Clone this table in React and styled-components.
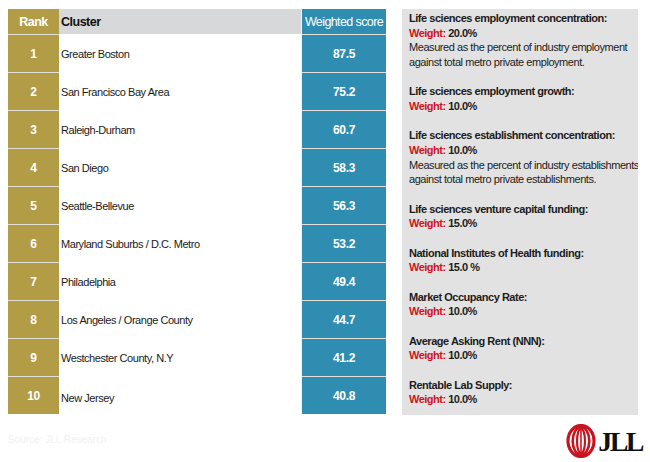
import React from 'react';
import styled, { createGlobalStyle } from 'styled-components';

const GlobalStyle = createGlobalStyle`
  body {
    margin: 0;
    background: #ffffff;
    font-family: 'Liberation Sans', Arial, sans-serif;
  }
`;

const Page = styled.div`
  width: 650px;
  height: 462px;
  padding: 9px 0 0 8px;
  box-sizing: border-box;
  display: flex;
  flex-direction: column;
`;

const Main = styled.div`
  display: flex;
  gap: 16px;
  align-items: flex-start;
`;

const Table = styled.div`
  width: 378px;
  display: grid;
  grid-template-columns: 51px 243px 84px;
`;

const HeadCell = styled.div`
  height: 25px;
  display: flex;
  align-items: center;
  justify-content: ${p => (p.$left ? 'flex-start' : 'center')};
  padding-left: ${p => (p.$left ? '2px' : '0')};
  background: ${p => p.$bg};
  color: ${p => p.$color};
  font-size: 12.5px;
  font-weight: ${p => (p.$regular ? 400 : 700)};
  letter-spacing: ${p => (p.$regular ? '-0.6px' : '-0.5px')};
  white-space: nowrap;
  border-right: ${p => (p.$divider ? '1px solid #eef2f4' : 'none')};
`;

const Cell = styled.div`
  height: 38px;
  box-sizing: border-box;
  border-top: 1px solid ${p => (p.$bg ? '#e2e0d6' : '#ffffff')};
  display: flex;
  align-items: center;
  justify-content: ${p => (p.$left ? 'flex-start' : 'center')};
  padding-left: ${p => (p.$left ? '2px' : '0')};
  padding-top: ${p => p.$shift || 0}px;
  background: ${p => p.$bg || '#ffffff'};
  color: ${p => (p.$bg ? '#ffffff' : '#1a1a1a')};
  font-size: ${p => (p.$bg ? '12px' : '11px')};
  font-weight: ${p => (p.$bg ? 700 : 400)};
  letter-spacing: ${p => (p.$bg ? '-0.3px' : '-0.45px')};
  white-space: nowrap;
  border-right: ${p => (p.$divider ? '1px solid #eef2f4' : 'none')};
`;

const Panel = styled.div`
  width: 236px;
  height: 406px;
  box-sizing: border-box;
  background: #e2e2e2;
  padding: 2px 0 0 7px;
  font-size: 11px;
  line-height: 14.67px;
  color: #1c1c1c;
  letter-spacing: -0.44px;
  overflow: hidden;
`;

const Factor = styled.div`
  margin-bottom: 14.67px;
`;

const Title = styled.div`
  font-weight: 700;
  letter-spacing: -0.47px;
  white-space: nowrap;
`;

const WeightLine = styled.div`
  font-weight: 700;
  letter-spacing: -0.5px;
`;

const WeightLabel = styled.span`
  color: #d0141c;
`;

const NoteLine = styled.div`
  font-weight: 400;
  white-space: nowrap;
`;

const Footer = styled.div`
  display: flex;
  justify-content: space-between;
  align-items: flex-start;
  padding-right: 8px;
  margin-top: 9px;
`;

const Source = styled.div`
  font-size: 10px;
  color: #f1f1f1;
  padding-top: 10px;
`;

const Logo = styled.div`
  display: flex;
  align-items: center;
  gap: 2px;
`;

const LogoText = styled.span`
  font-family: 'Liberation Serif', 'Times New Roman', serif;
  font-weight: 700;
  font-size: 28px;
  letter-spacing: -2.5px;
  color: #111111;
  line-height: 1;
  padding-top: 2px;
`;

const GOLD = '#b39c46';
const BLUE = '#2f8db1';

const rows = [
  ['1', 'Greater Boston', '87.5'],
  ['2', 'San Francisco Bay Area', '75.2'],
  ['3', 'Raleigh-Durham', '60.7'],
  ['4', 'San Diego', '58.3'],
  ['5', 'Seattle-Bellevue', '56.3'],
  ['6', 'Maryland Suburbs / D.C. Metro', '53.2'],
  ['7', 'Philadelphia', '49.4'],
  ['8', 'Los Angeles / Orange County', '44.7'],
  ['9', 'Westchester County, N.Y', '41.2'],
  ['10', 'New Jersey', '40.8'],
];

const factors = [
  {
    title: 'Life sciences employment concentration:',
    weight: '20.0%',
    note: ['Measured as the percent of industry employment', 'against total metro private employment.'],
  },
  { title: 'Life sciences employment growth:', weight: '10.0%' },
  {
    title: 'Life sciences establishment concentration:',
    weight: '10.0%',
    note: ['Measured as the percent of industry establishments', 'against total metro private establishments.'],
  },
  { title: 'Life sciences venture capital funding:', weight: '15.0%' },
  { title: 'National Institutes of Health funding:', weight: '15.0 %' },
  { title: 'Market Occupancy Rate:', weight: '10.0%' },
  { title: 'Average Asking Rent (NNN):', weight: '10.0%' },
  { title: 'Rentable Lab Supply:', weight: '10.0%' },
];

const JllMark = () => (
  <svg width="30" height="34" viewBox="0 0 30 34">
    <g fill="none" stroke="#c8141e">
      <ellipse cx="15" cy="17" rx="13" ry="15.5" strokeWidth="3.2" />
      <ellipse cx="15" cy="17" rx="8.3" ry="14" strokeWidth="2.6" />
      <ellipse cx="15" cy="17" rx="4" ry="12.5" strokeWidth="2.2" />
      <line x1="15" y1="5" x2="15" y2="29" strokeWidth="1.6" />
    </g>
  </svg>
);

const App = () => {
  return (
    <Page>
      <GlobalStyle />
      <Main>
        <Table>
          <HeadCell $bg={GOLD} $color="#ffffff">Rank</HeadCell>
          <HeadCell $bg="#d7d8d9" $color="#111111" $left $divider>Cluster</HeadCell>
          <HeadCell $bg={BLUE} $color="#ffffff" $regular>Weighted score</HeadCell>
          {rows.map(([rank, name, score], i) => (
            <React.Fragment key={rank}>
              <Cell $bg={GOLD} $shift={i === 9 ? -12 : 0}>{rank}</Cell>
              <Cell $left $divider $shift={i === 9 ? 4 : 0}>{name}</Cell>
              <Cell $bg={BLUE} $shift={i === 9 ? -12 : 0}>{score}</Cell>
            </React.Fragment>
          ))}
        </Table>
        <Panel>
          {factors.map(f => (
            <Factor key={f.title}>
              <Title>{f.title}</Title>
              <WeightLine>
                <WeightLabel>Weight:</WeightLabel> {f.weight}
              </WeightLine>
              {f.note && f.note.map(line => <NoteLine key={line}>{line}</NoteLine>)}
            </Factor>
          ))}
        </Panel>
      </Main>
      <Footer>
        <Source>Source: JLL Research</Source>
        <Logo>
          <JllMark />
          <LogoText>JLL</LogoText>
        </Logo>
      </Footer>
    </Page>
  );
};

export default App;
